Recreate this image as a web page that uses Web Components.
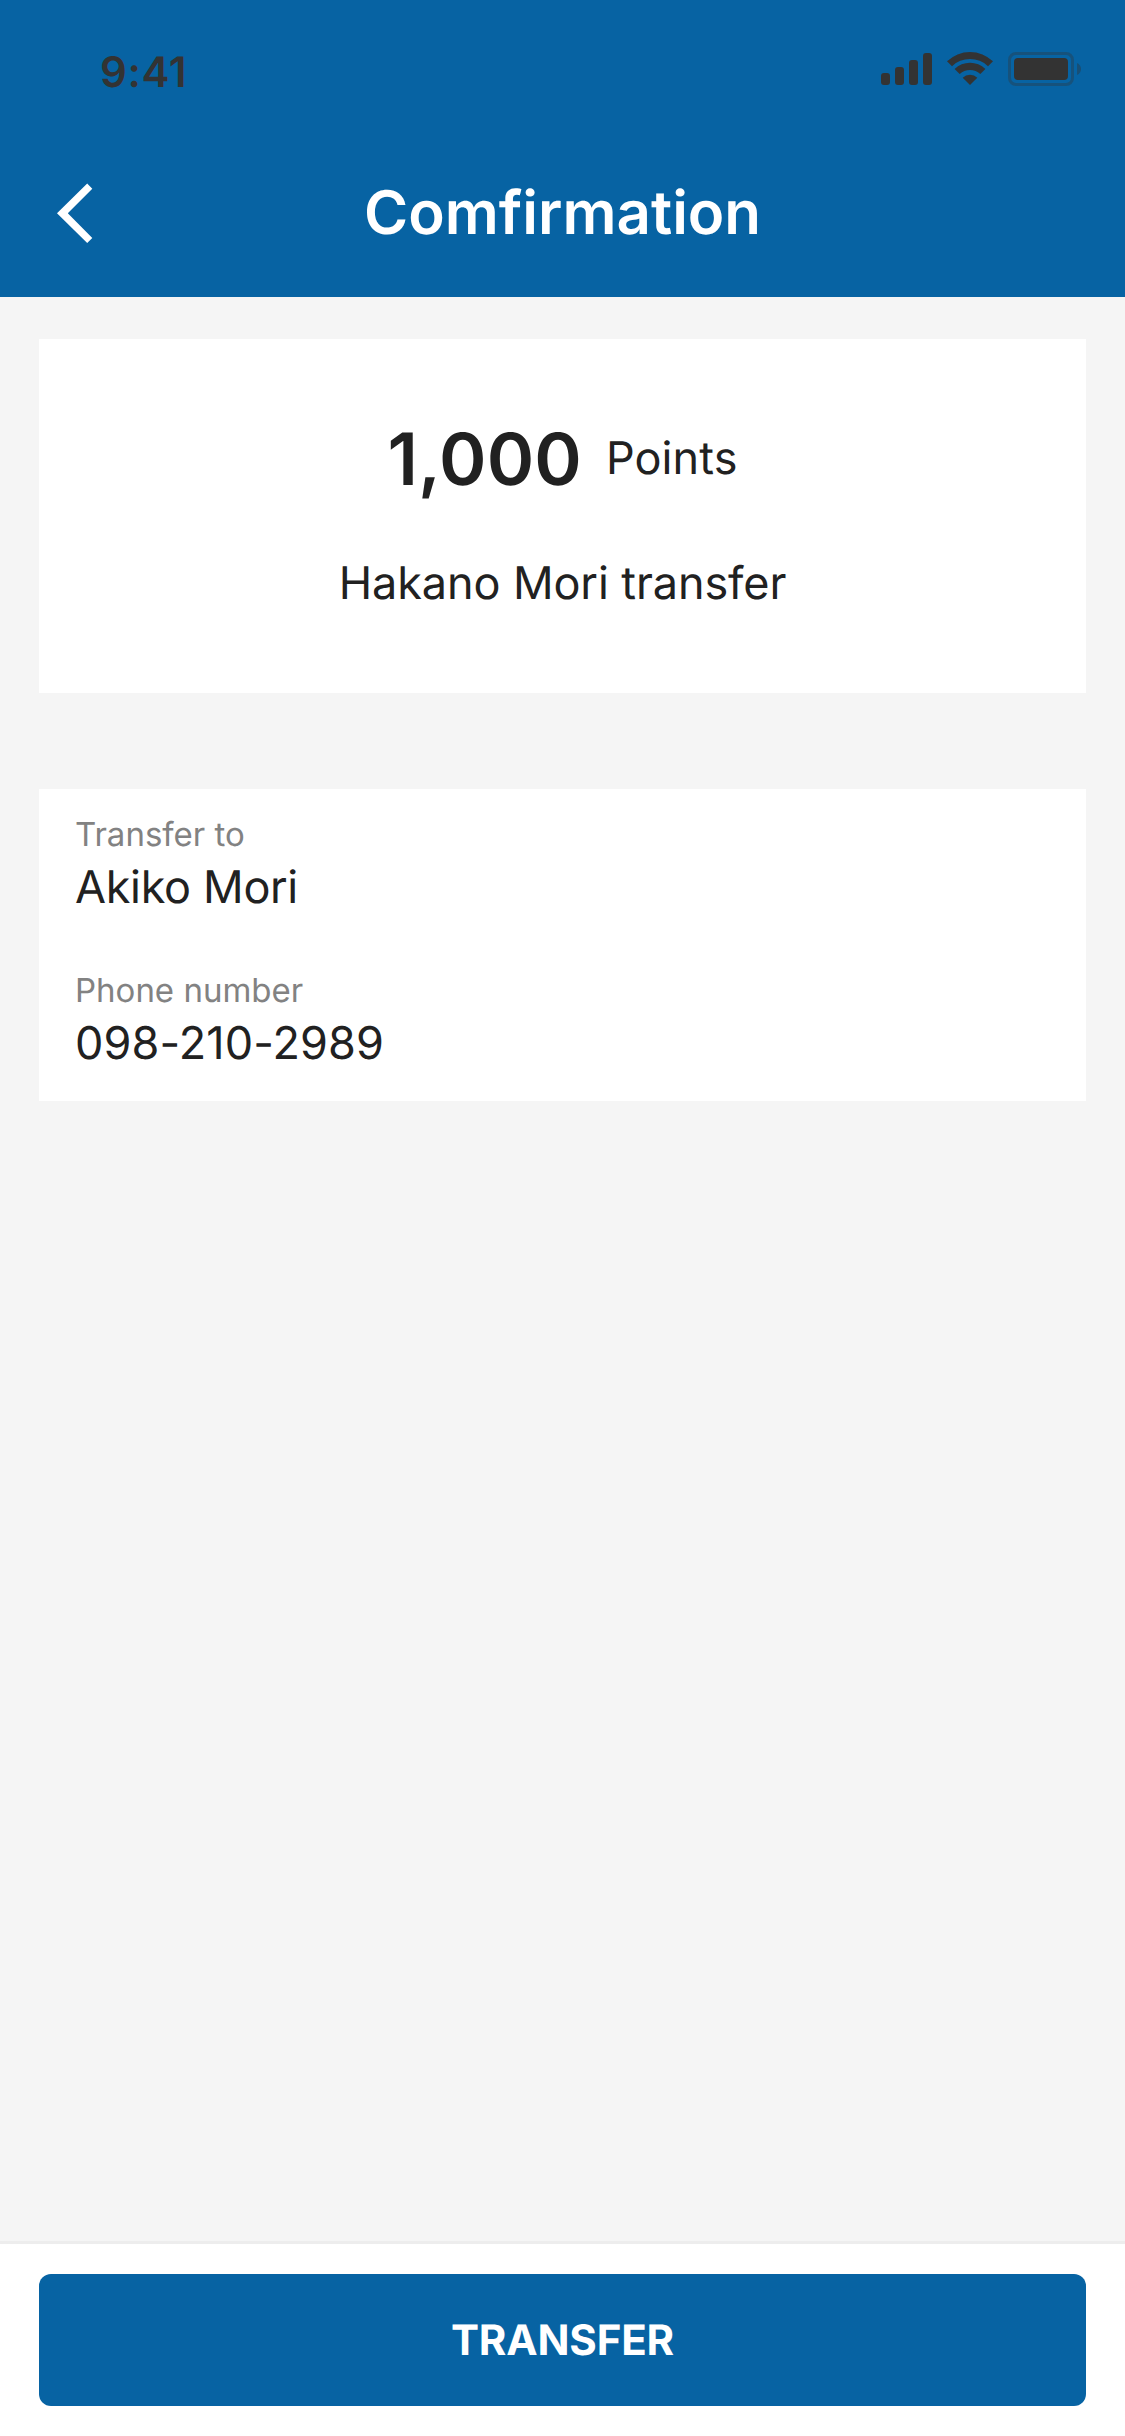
<!DOCTYPE html>
<html lang="en">
<head>
<meta charset="utf-8">
<title>Comfirmation</title>
<style>
  html, body { margin: 0; height: 100%; }
  body {
    --brand: #0763a3;
    --ink: #212121;
    --muted: #828282;
    --status: #333333;
    font-family: Inter, "Liberation Sans", sans-serif;
    text-rendering: geometricPrecision;
    color: var(--ink);
  }
</style>
</head>
<body>
<confirm-screen>
  <status-bar slot="header">9:41</status-bar>
  <nav-bar slot="header">Comfirmation</nav-bar>
  <amount-card>
    <span slot="amount">1,000</span>
    <span slot="unit">Points</span>
    <span slot="note">Hakano Mori transfer</span>
  </amount-card>
  <detail-card>
    <detail-field label="Transfer to" style="--value-tracking: -.32px">Akiko Mori</detail-field>
    <detail-field label="Phone number" style="--value-tracking: .1px">098-210-2989</detail-field>
  </detail-card>
  <action-button slot="footer">TRANSFER</action-button>
</confirm-screen>
<script>
  const define = (name, html) => {
    const template = document.createElement('template');
    template.innerHTML = html;
    customElements.define(name, class extends HTMLElement {
      constructor() {
        super();
        this.attachShadow({ mode: 'open' }).append(template.content.cloneNode(true));
      }
      connectedCallback() {
        const label = this.shadowRoot.querySelector('.label');
        if (label) label.textContent = this.getAttribute('label');
      }
    });
  };

  define('confirm-screen', `
    <style>
      :host { display: flex; flex-direction: column; width: 1125px; height: 2436px; background: #f5f5f5; overflow: hidden; }
      header { background: var(--brand); height: 297px; flex: none; }
      main { flex: 1; display: flex; flex-direction: column; gap: 96px; padding: 42px 39px 0; }
      footer { flex: none; background: #fff; border-top: 3px solid #ededed; padding: 30px 39px; }
    </style>
    <header><slot name="header"></slot></header>
    <main><slot></slot></main>
    <footer><slot name="footer"></slot></footer>`);

  define('status-bar', `
    <style>
      :host { display: flex; justify-content: space-between; box-sizing: border-box; height: 132px; padding: 47px 43px 0 100px; color: var(--status); }
      .time { font-size: 42px; line-height: 52px; font-weight: 600; letter-spacing: .6px; }
      svg { display: block; width: 204px; height: 40px; margin-top: 3px; }
    </style>
    <span class="time"><slot></slot></span>
    <svg viewBox="878 50 204 40" fill="currentColor">
      <rect x="881" y="73" width="9" height="12" rx="3"/>
      <rect x="895" y="67" width="9" height="18" rx="3"/>
      <rect x="909" y="60" width="9" height="25" rx="3"/>
      <rect x="923" y="53" width="9" height="32" rx="3"/>
      <path d="M947 61.3A33 33 0 0 1 993 61.3L988 66.2A26 26 0 0 0 952 66.2Z"/>
      <path d="M954.6 68.9A22.3 22.3 0 0 1 985.4 68.9L980.3 74.1A15 15 0 0 0 959.7 74.1Z"/>
      <path d="M962.7 77.8A10.3 10.3 0 0 1 977.3 77.8L970 85Z"/>
      <rect x="1009.5" y="53.5" width="63" height="31" rx="6.5" fill="none" stroke="currentColor" stroke-width="3" opacity=".35"/>
      <path d="M1077 63C1079.5 64 1081 66.4 1081 69S1079.5 74 1077 75Z" opacity=".4"/>
      <rect x="1014" y="58" width="54" height="22" rx="4"/>
    </svg>`);

  define('nav-bar', `
    <style>
      :host { display: grid; grid-template-columns: 60px 1fr 60px; align-items: center; height: 160px; padding: 0 45px; color: #fff; }
      svg { display: block; width: 60px; height: 72px; margin-top: 1px; }
      h1 { margin: 2px 0 0; text-align: center; font-size: 60px; line-height: 72px; font-weight: 600; }
    </style>
    <svg viewBox="45 176.5 60 72" fill="currentColor"><path d="M87.2 183.1L92.3 188.2L67.8 212.8L92.3 237.4L87.2 242.6L57 212.8Z"/></svg>
    <h1><slot></slot></h1>`);

  define('amount-card', `
    <style>
      :host { display: flex; flex-direction: column; align-items: center; gap: 49px; box-sizing: border-box; height: 354px; padding-top: 75px; background: #fff; }
      .sum { display: flex; align-items: center; gap: 24px; height: 90px; }
      .amount { font-size: 72px; line-height: 90px; font-weight: 600; margin-top: 2px; letter-spacing: .1px; }
      .unit, .note { font-size: 45px; line-height: 60px; }
      .unit { margin-top: -2px; letter-spacing: .1px; }
      .note { letter-spacing: -.1px; }
    </style>
    <div class="sum"><span class="amount"><slot name="amount"></slot></span><span class="unit"><slot name="unit"></slot></span></div>
    <div class="note"><slot name="note"></slot></div>`);

  define('detail-card', `
    <style>
      :host { display: flex; flex-direction: column; gap: 52px; box-sizing: border-box; height: 312px; padding: 24px 36px 0; background: #fff; }
    </style>
    <slot></slot>`);

  define('detail-field', `
    <style>
      :host { display: flex; flex-direction: column; gap: 2px; }
      .label { font-size: 33px; line-height: 42px; color: var(--muted); }
      .value { font-size: 45px; line-height: 60px; letter-spacing: var(--value-tracking, 0); }
    </style>
    <span class="label"></span>
    <span class="value"><slot></slot></span>`);

  define('action-button', `
    <style>
      :host { display: block; }
      button { display: block; width: 100%; height: 132px; border: 0; border-radius: 12px; padding: 2px 0 0; background: var(--brand); color: #fff; font: 700 42px/52px Inter, "Liberation Sans", sans-serif; letter-spacing: -.15px; text-rendering: inherit; }
    </style>
    <button type="button"><slot></slot></button>`);
</script>
</body>
</html>
